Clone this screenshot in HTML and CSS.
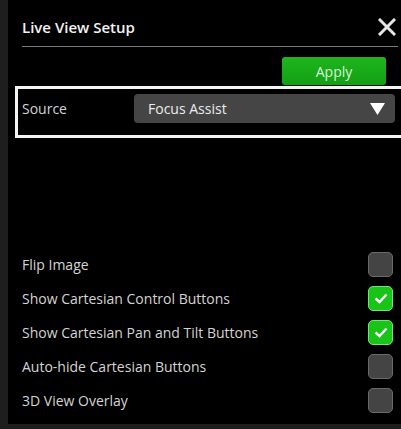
FILE: index.html
```html
<!DOCTYPE html>
<html>
<head>
<meta charset="utf-8">
<link rel="stylesheet" href="styles.css">
</head>
<body>
<div class="panel">
  <div class="header">
    <span class="title">Live View Setup</span>
    <svg class="close" width="18" height="18" viewBox="0 0 18 18"><path d="M2 2 L16 16 M16 2 L2 16" stroke="#e6e6e6" stroke-width="3" stroke-linecap="square"/></svg>
  </div>
  <div class="actions">
    <button class="apply">Apply</button>
  </div>
  <div class="source">
    <span class="label">Source</span>
    <div class="select">
      <span>Focus Assist</span>
      <svg width="15" height="12" viewBox="0 0 15 12"><path d="M0 0 H15 L7.5 12 Z" fill="#fff"/></svg>
    </div>
  </div>
  <div class="options">
    <div class="opt"><span>Flip Image</span><i class="box"></i></div>
    <div class="opt"><span>Show Cartesian Control Buttons</span><i class="box on"><svg width="14" height="11" viewBox="0 0 14 11"><path d="M1.5 5.5 L5.5 9 L12.5 1.5" fill="none" stroke="#fff" stroke-width="2.4"/></svg></i></div>
    <div class="opt"><span>Show Cartesian Pan and Tilt Buttons</span><i class="box on"><svg width="14" height="11" viewBox="0 0 14 11"><path d="M1.5 5.5 L5.5 9 L12.5 1.5" fill="none" stroke="#fff" stroke-width="2.4"/></svg></i></div>
    <div class="opt"><span>Auto-hide Cartesian Buttons</span><i class="box"></i></div>
    <div class="opt"><span>3D View Overlay</span><i class="box"></i></div>
  </div>
</div>
</body>
</html>
```
FILE: styles.css
```css
html, body {
  margin: 0;
  height: 100%;
  background: #1e1e1e;
}
body {
  font-family: "Open Sans", "Noto Sans", sans-serif;
  color: #d4d4d4;
  overflow: hidden;
}
.panel {
  margin-left: 8px;
  height: 424px;
  background: #000;
  box-sizing: border-box;
  padding-top: 10px;
}
.header {
  margin: 0 3px 0 14px;
  height: 36px;
  border-bottom: 1px solid #7a7a7a;
  display: flex;
  align-items: center;
  justify-content: space-between;
  padding-right: 2px;
}
.title {
  font-weight: 600;
  font-size: 15px;
  color: #f2f2f2;
  margin-top: -2px;
}
.close { margin-top: -2px; }
.actions {
  display: flex;
  justify-content: flex-end;
  padding: 10px 15px 0 0;
  height: 29px;
}
.apply {
  width: 104px;
  height: 28px;
  background: linear-gradient(#1fb51f, #12a012);
  border: none;
  border-radius: 3px;
  color: #d8f5d8;
  font-family: inherit;
  font-size: 14px;
  padding: 0;
}
.source {
  margin-left: 7px;
  height: 52px;
  border: 3px solid #f4f4f4;
  border-right: none;
  box-sizing: border-box;
  display: flex;
  align-items: flex-start;
  padding: 5px 0 0 4px;
}
.label {
  width: 112px;
  font-size: 14px;
  line-height: 30px;
}
.select {
  width: 261px;
  height: 29px;
  background: #454545;
  border-radius: 4px;
  display: flex;
  align-items: center;
  justify-content: space-between;
  padding: 0 10px 0 14px;
  box-sizing: border-box;
  font-size: 14px;
  color: #ececec;
}
.options {
  margin-top: 109px;
  padding: 0 8px 0 14px;
}
.opt {
  height: 34px;
  display: flex;
  align-items: center;
  justify-content: space-between;
  font-size: 14px;
}
.box {
  width: 25px;
  height: 25px;
  box-sizing: border-box;
  background: #444;
  border: 1px solid #6a6a6a;
  border-radius: 5px;
  display: flex;
  align-items: center;
  justify-content: center;
}
.box.on {
  background: #18c418;
  border-color: #7fdc7f;
}
```
